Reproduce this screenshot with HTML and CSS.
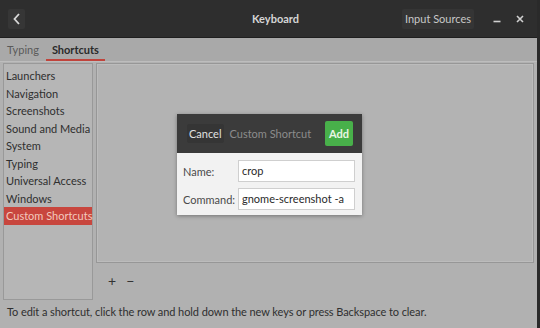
FILE: index.html
```html
<!DOCTYPE html>
<html lang="en">
<head>
  <meta charset="UTF-8">
  <title>Keyboard</title>
  <link rel="stylesheet" href="styles.css">
</head>
<body>
  <div class="janela">
    <!-- BARRA DE TITULO -->
    <div class="topo">
      <div class="btn-voltar">
        <svg width="8" height="12" viewBox="0 0 8 12"><path d="M6 1 L1.5 6 L6 11" fill="none" stroke="#d8d8d8" stroke-width="1.8"/></svg>
      </div>
      <div class="titulo">Keyboard</div>
      <div class="btn-fontes">Input Sources</div>
      <div class="btn-min">
        <svg width="8" height="8" viewBox="0 0 8 8"><path d="M0.5 6.5 H7.5" stroke="#d0d0d0" stroke-width="1.6"/></svg>
      </div>
      <div class="btn-fechar">
        <svg width="8" height="8" viewBox="0 0 8 8"><path d="M1 1 L7 7 M7 1 L1 7" stroke="#d0d0d0" stroke-width="1.6"/></svg>
      </div>
    </div>

    <!-- ABAS -->
    <div class="abas">
      <div class="aba">Typing</div>
      <div class="aba ativa">Shortcuts</div>
    </div>

    <!-- CONTEUDO -->
    <div class="conteudo">
      <div class="lista">
        <div class="item">Launchers</div>
        <div class="item">Navigation</div>
        <div class="item">Screenshots</div>
        <div class="item">Sound and Media</div>
        <div class="item">System</div>
        <div class="item">Typing</div>
        <div class="item">Universal Access</div>
        <div class="item">Windows</div>
        <div class="item selecionado">Custom Shortcuts</div>
      </div>
      <div class="coluna">
        <div class="painel"></div>
        <div class="acoes">
          <span class="acao">+</span>
          <span class="acao">&minus;</span>
        </div>
      </div>
    </div>

    <div class="dica">To edit a shortcut, click the row and hold down the new keys or press Backspace to clear.</div>

    <!-- DIALOGO -->
    <div class="dialogo">
      <div class="dialogo-topo">
        <div class="btn-cancelar">Cancel</div>
        <div class="dialogo-titulo">Custom Shortcut</div>
        <div class="btn-add">Add</div>
      </div>
      <div class="dialogo-corpo">
        <div class="linha">
          <span class="rotulo">Name:</span>
          <div class="campo">crop</div>
        </div>
        <div class="linha">
          <span class="rotulo">Command:</span>
          <div class="campo">gnome-screenshot -a</div>
        </div>
      </div>
    </div>
  </div>
</body>
</html>
```

FILE: styles.css
```css
body {
  margin: 0;
  padding: 0;
  font-family: 'Lato', sans-serif;
  font-size: 11px;
  color: #2f2f2f;
  background-color: #2a2a2a;
}

.janela {
  position: relative;
  width: 537px;
  height: 328px;
  background-color: #b1b1b1;
  display: flex;
  flex-direction: column;
  overflow: hidden;
}

.topo {
  height: 37px;
  background-color: #2e2e2e;
  border-bottom: 1px solid #1f1f1f;
  display: flex;
  align-items: center;
  padding: 0 8px;
  color: #d6d6d6;
}

.btn-voltar {
  width: 17px;
  height: 20px;
  background-color: #363636;
  border-radius: 2px;
  display: flex;
  align-items: center;
  justify-content: center;
}

.titulo {
  flex: 1;
  text-align: center;
  font-weight: bold;
  padding-left: 124px;
}

.btn-fontes {
  height: 20px;
  line-height: 20px;
  padding: 0 3px;
  background-color: #353535;
  border-radius: 2px;
  color: #c8c8c8;
}

.btn-min {
  margin-left: 19px;
  display: flex;
}

.btn-fechar {
  margin-left: 15px;
  margin-right: 5px;
  display: flex;
}

.abas {
  height: 23px;
  background-color: #a9a9a9;
  border-bottom: 1px solid #bdbdbd;
  display: flex;
}

.aba {
  padding: 5px 7px 0 7px;
  color: #5a5a5a;
}

.aba.ativa {
  color: #2a2a2a;
  font-weight: bold;
  margin-left: 0;
  padding: 5px 6px 0 6px;
  border-bottom: 2px solid #c0443c;
  height: 16px;
}

.conteudo {
  display: flex;
  padding: 1px 3px 0 3px;
  gap: 3px;
  height: 237px;
}

.lista {
  width: 90px;
  border: 1px solid #999;
  background-color: #b6b6b6;
  padding-top: 3px;
  box-sizing: border-box;
  height: 237px;
}

.item {
  height: 17.5px;
  line-height: 17.5px;
  padding-left: 2px;
  white-space: nowrap;
}

.item.selecionado {
  background-color: #c8463e;
  color: #f2c9bd;
  height: 18px;
  line-height: 18px;
}

.coluna {
  flex: 1;
  display: flex;
  flex-direction: column;
}

.painel {
  height: 198px;
  border: 1px solid #979797;
  box-shadow: inset 0 0 0 1px #bcbcbc;
  background-color: #b3b3b3;
}

.acoes {
  display: flex;
  gap: 10px;
  padding: 9px 0 0 12px;
  font-size: 14px;
  color: #333;
}

.dica {
  padding: 5px 7px 0;
  white-space: nowrap;
  letter-spacing: -0.08px;
}

.dialogo {
  position: absolute;
  left: 177px;
  top: 114px;
  width: 185px;
  box-shadow: 0 1px 4px rgba(0, 0, 0, 0.35);
}

.dialogo-topo {
  height: 39px;
  background-color: #3b3b3b;
  display: flex;
  align-items: center;
  padding: 0 9px 0 10px;
}

.btn-cancelar {
  height: 19px;
  line-height: 19px;
  padding: 0 2px;
  background-color: #353535;
  color: #e0e0e0;
  border-radius: 2px;
}

.dialogo-titulo {
  flex: 1;
  color: #8c8c8c;
  padding-left: 6px;
}

.btn-add {
  height: 25px;
  line-height: 25px;
  padding: 0 4px;
  background-color: #48b04a;
  color: #e8f6e5;
  font-weight: bold;
  border-radius: 2px;
}

.dialogo-corpo {
  background-color: #f2f2f2;
  padding: 7px 7px 5px 6px;
  display: flex;
  flex-direction: column;
  gap: 6px;
}

.linha {
  display: flex;
  align-items: center;
  justify-content: space-between;
}

.rotulo {
  color: #4a4a4a;
}

.campo {
  width: 112px;
  height: 20px;
  line-height: 20px;
  background-color: #fff;
  border: 1px solid #cfcfcf;
  padding-left: 3px;
  color: #2a2a2a;
  white-space: nowrap;
}
```
